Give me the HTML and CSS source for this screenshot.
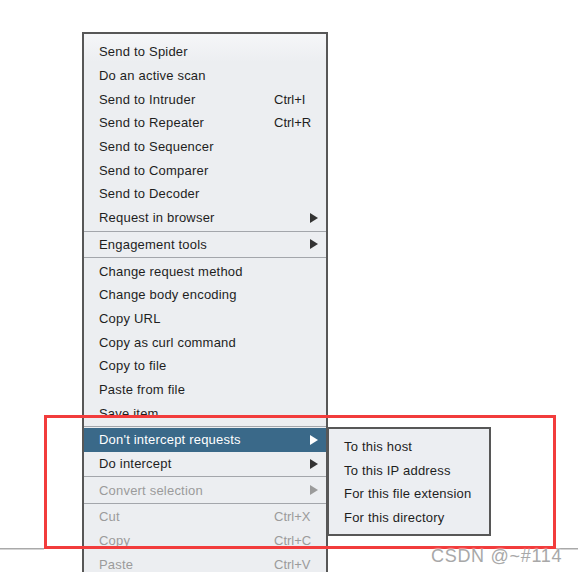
FILE: index.html
```html
<!DOCTYPE html>
<html lang="en">
<head>
  <meta charset="UTF-8">
  <title>Context menu</title>
  <link rel="stylesheet" href="styles.css">
</head>
<body>

  <!-- panel edge behind the popup -->
  <div class="edge edge-left"></div>
  <div class="edge edge-right"></div>

  <div class="menu">
    <div class="item"><span>Send to Spider</span></div>
    <div class="item"><span>Do an active scan</span></div>
    <div class="item"><span>Send to Intruder</span><span class="key">Ctrl+I</span></div>
    <div class="item"><span>Send to Repeater</span><span class="key">Ctrl+R</span></div>
    <div class="item"><span>Send to Sequencer</span></div>
    <div class="item"><span>Send to Comparer</span></div>
    <div class="item"><span>Send to Decoder</span></div>
    <div class="item"><span>Request in browser</span><span></span><i class="arrow"></i></div>
    <div class="sep"></div>
    <div class="item"><span>Engagement tools</span><span></span><i class="arrow"></i></div>
    <div class="sep"></div>
    <div class="item"><span>Change request method</span></div>
    <div class="item"><span>Change body encoding</span></div>
    <div class="item"><span>Copy URL</span></div>
    <div class="item"><span>Copy as curl command</span></div>
    <div class="item"><span>Copy to file</span></div>
    <div class="item"><span>Paste from file</span></div>
    <div class="item"><span>Save item</span></div>
    <div class="sep"></div>
    <div class="item active"><span>Don't intercept requests</span><span></span><i class="arrow"></i></div>
    <div class="item"><span>Do intercept</span><span></span><i class="arrow"></i></div>
    <div class="sep"></div>
    <div class="item disabled"><span>Convert selection</span><span></span><i class="arrow"></i></div>
    <div class="sep"></div>
    <div class="item disabled"><span>Cut</span><span class="key">Ctrl+X</span></div>
    <div class="item disabled"><span>Copy</span><span class="key">Ctrl+C</span></div>
    <div class="item disabled"><span>Paste</span><span class="key">Ctrl+V</span></div>
  </div>

  <div class="submenu">
    <div class="item"><span>To this host</span></div>
    <div class="item"><span>To this IP address</span></div>
    <div class="item"><span>For this file extension</span></div>
    <div class="item"><span>For this directory</span></div>
  </div>

  <div class="highlight-box"></div>
  <div class="watermark">CSDN @~#114</div>

</body>
</html>
```

FILE: styles.css
```css
body {
  margin: 0;
  padding: 0;
  width: 578px;
  height: 572px;
  overflow: hidden;
  position: relative;
  background: #ffffff;
  font-family: "Liberation Sans", Arial, sans-serif;
  font-size: 13px;
  letter-spacing: 0.2px;
  color: #1e1e1e;
}

/* grey panel edge */
.edge {
  position: absolute;
  top: 548px;
  height: 1px;
  background: #a9a9a9;
  border-bottom: 1px solid #d4d4d4;
}

.edge-left {
  left: 0;
  width: 44px;
}

.edge-right {
  left: 556px;
  width: 22px;
}

/* Main popup */
.menu {
  position: relative;
  width: 246px;
  box-sizing: border-box;
  margin: 32px 0 0 82px;
  padding-top: 6px;
  border: 2px solid #575757;
  border-bottom: none;
  background: linear-gradient(#f5f6f8, #eceef1 28px);
}

.item {
  display: grid;
  grid-template-columns: 175px 1fr 8px;
  align-items: center;
  height: 23.7px;
  padding: 0 8px 0 15px;
  white-space: nowrap;
}

.key {
  letter-spacing: 0;
}

.arrow {
  width: 0;
  height: 0;
  border-left: 8px solid #333333;
  border-top: 5px solid transparent;
  border-bottom: 5px solid transparent;
}

.sep {
  height: 1px;
  margin: 1px 0;
  background: #a3a6ab;
}

.item.active {
  background: #3a6989;
  color: #ffffff;
}

.item.active .arrow {
  border-left-color: #ffffff;
}

.item.disabled {
  color: #9b9b9b;
}

.item.disabled .arrow {
  border-left-color: #9b9b9b;
}

/* Sub menu */
.submenu {
  position: absolute;
  left: 327px;
  top: 427px;
  width: 164px;
  box-sizing: border-box;
  padding: 6px 0 4px;
  border: 2px solid #575757;
  background: #eceef2;
}

.submenu .item {
  display: block;
  line-height: 23.7px;
  padding: 0 0 0 15px;
}

/* red annotation */
.highlight-box {
  position: absolute;
  left: 44px;
  top: 415px;
  width: 506px;
  height: 128px;
  border: 3px solid #f23c3c;
}

.watermark {
  position: absolute;
  left: 431px;
  top: 546px;
  font-size: 18px;
  letter-spacing: 0.7px;
  color: #a8a8a8;
  text-shadow: 0 0 2px #ffffff, 0 0 2px #ffffff;
}
```
